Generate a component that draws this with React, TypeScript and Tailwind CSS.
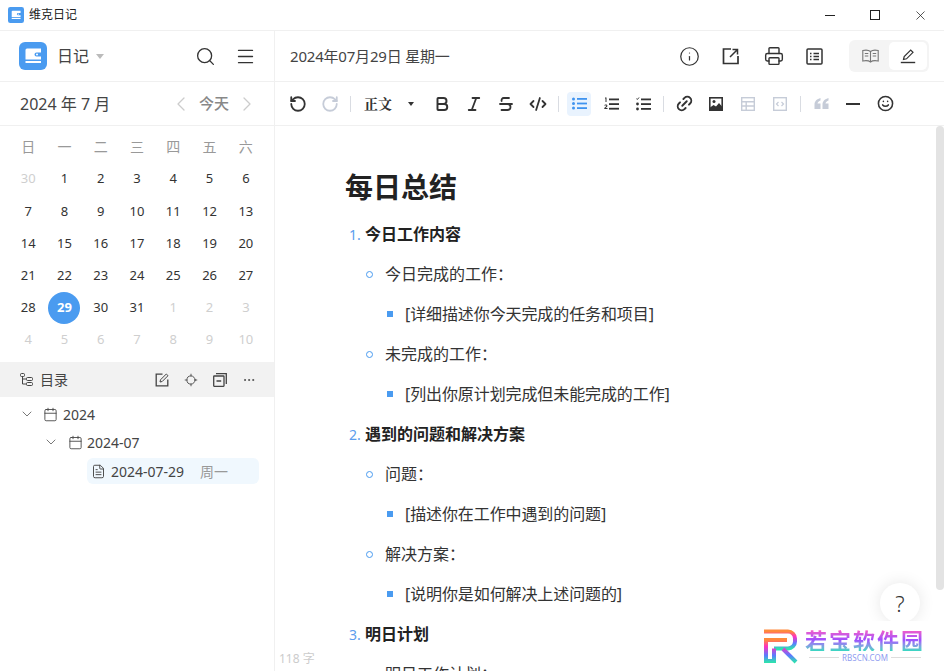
import type { ReactNode } from 'react';
import {
  Search, Menu, Info, Printer, RotateCcw, RotateCw, Bold, Italic, Strikethrough, CodeXml, Link2, Smile, ChevronLeft, ChevronRight, ChevronDown, Calendar, FileText, Ellipsis, Locate, X,
} from 'lucide-react';

const weekdays = ['日', '一', '二', '三', '四', '五', '六'];
const days = [
  [30, 1, 2, 3, 4, 5, 6],
  [7, 8, 9, 10, 11, 12, 13],
  [14, 15, 16, 17, 18, 19, 20],
  [21, 22, 23, 24, 25, 26, 27],
  [28, 29, 30, 31, 1, 2, 3],
  [4, 5, 6, 7, 8, 9, 10],
];

function isMuted(row: number, day: number) {
  return (row === 0 && day > 20) || (row === 4 && day < 10) || row === 5;
}

function WalletLogo({ size, radius }: { size: number; radius: number }) {
  return (
    <svg width={size} height={size} viewBox="0 0 28 28">
      <rect width="28" height="28" rx={radius} fill="#4a9bf0" />
      <path d="M8 6.500h14v4h-4.500a2 2 0 0 0 0 4H22v3H6.500V8A1.500 1.500 0 0 1 8 6.500z" fill="#fff" />
      <rect x="6.500" y="19" width="15.500" height="2" fill="#fff" />
      <circle cx="18" cy="12.500" r="1" fill="#fff" />
    </svg>
  );
}

function ExportIcon() {
  return (
    <svg width="18" height="18" viewBox="0 0 18 18" fill="none" stroke="#333" strokeWidth="1.700">
      <path d="M9 2H1.500v14.500H16V9" />
      <path d="M8 10l7-7M10.500 2.500h5v5" strokeWidth="1.500" />
    </svg>
  );
}

function OutlineIcon() {
  return (
    <svg width="17" height="17" viewBox="0 0 17 17" fill="none" stroke="#333" strokeWidth="1.500">
      <rect x="1" y="1" width="15" height="15" rx="1" />
      <path d="M4 5.500h1.500M4 8.500h1.500M4 11.500h1.500M7.500 5.500h5.500M7.500 8.500h5.500M7.500 11.500h5.500" />
    </svg>
  );
}

function BookIcon() {
  return (
    <svg width="17" height="14" viewBox="0 0 17 14" fill="none" stroke="#777" strokeWidth="1.100">
      <path d="M8.500 2.500C7 1.300 3 1 .8 1.500v10.500c2.400-.5 6.200-.2 7.700 1 1.500-1.200 5.300-1.500 7.700-1V1.500C14 1 10 1.300 8.500 2.500zM8.500 2.500v10.500" />
      <path d="M2.800 4.500h3.500M2.800 7h3.500M10.700 4.500h3.500M10.700 7h3.500" />
    </svg>
  );
}

function PenIcon() {
  return (
    <svg width="16" height="16" viewBox="0 0 16 16" fill="none" stroke="#333" strokeWidth="1.200">
      <path d="M3.500 11.500l.7-3L10.700 2l2.300 2.300L6.500 10.800z" />
      <path d="M.8 14.500h14.400" strokeWidth="1.400" />
    </svg>
  );
}

function BulletListIcon() {
  return (
    <svg width="15" height="13" viewBox="0 0 15 13" fill="#3f93ef">
      <circle cx="1.500" cy="2" r="1.500" />
      <circle cx="1.500" cy="6.500" r="1.500" />
      <circle cx="1.500" cy="11" r="1.500" />
      <rect x="5" y="1" width="10" height="1.800" />
      <rect x="5" y="5.600" width="10" height="1.800" />
      <rect x="5" y="10.200" width="10" height="1.800" />
    </svg>
  );
}

function OrderedListIcon() {
  return (
    <svg width="15" height="14" viewBox="0 0 15 14" fill="#333">
      <rect x="5" y="1.500" width="10" height="1.800" />
      <rect x="5" y="6.200" width="10" height="1.800" />
      <rect x="5" y="10.800" width="10" height="1.800" />
      <path d="M1 .5h1.500v4.500H1.500V1.500H1zM.3 8.500C.5 7 3.400 7 3.400 8.700c0 1-1 1.500-1.800 2.300h1.900v1H.3v-.9c1-1 2-1.700 2-2.300 0-.7-1-.6-1.100 0z" />
    </svg>
  );
}

function TaskListIcon() {
  return (
    <svg width="15" height="14" viewBox="0 0 15 14" fill="#333">
      <path d="M.3 1.500l1 1L3 .5" fill="none" stroke="#333" strokeWidth="1" />
      <circle cx="1.500" cy="7" r="1.400" />
      <circle cx="1.500" cy="12" r="1.400" />
      <rect x="5" y="1.500" width="10" height="1.800" />
      <rect x="5" y="6.200" width="10" height="1.800" />
      <rect x="5" y="11" width="10" height="1.800" />
    </svg>
  );
}

function ImageIcon() {
  return (
    <svg width="14" height="14" viewBox="0 0 14 14">
      <rect x=".8" y=".8" width="12.400" height="12.400" fill="none" stroke="#333" strokeWidth="1.600" />
      <circle cx="5" cy="4.500" r="1.500" fill="#333" />
      <path d="M1 10.500l3.500-2.500 2.500 1.500L10 6l3 3.500V13H1z" fill="#333" />
    </svg>
  );
}

function TableIcon() {
  return (
    <svg width="14" height="14" viewBox="0 0 14 14" fill="none" stroke="#c6ccd8" strokeWidth="1.400">
      <rect x=".7" y=".7" width="12.600" height="12.600" />
      <path d="M.7 4.800h12.600M.7 9h12.600M5.200 4.800v8.500" />
    </svg>
  );
}

function EmbedIcon() {
  return (
    <svg width="14" height="14" viewBox="0 0 14 14" fill="none" stroke="#c6ccd8" strokeWidth="1.400">
      <rect x=".7" y=".7" width="12.600" height="12.600" />
      <path d="M5.500 5L3.500 7l2 2M8.500 5l2 2-2 2" strokeWidth="1.200" />
    </svg>
  );
}

function QuoteIcon() {
  return (
    <svg width="15" height="13" viewBox="0 0 15 13" fill="#c6ccd8">
      <path d="M6.500 1C3 2 .5 4 .5 7.500V12h6V6.500H3.500C3.700 5 5 4 6.500 3.500zM14.500 1C11 2 8.500 4 8.500 7.500V12h6V6.500h-3c.2-1.500 1.500-2.500 3-3z" />
    </svg>
  );
}

function TreeIcon() {
  return (
    <svg width="13" height="13" viewBox="0 0 13 13" fill="none" stroke="#444" strokeWidth="1">
      <rect x=".5" y=".5" width="4" height="3" rx="1" />
      <rect x="6.500" y="4.500" width="6" height="3" rx="1" />
      <rect x="6.500" y="9.500" width="6" height="3" rx="1" />
      <path d="M2.500 3.500V11h4M2.500 6h4" />
    </svg>
  );
}

function NoteIcon() {
  return (
    <svg width="14" height="14" viewBox="0 0 14 14" fill="none" stroke="#444" strokeWidth="1.300">
      <path d="M7.500 1.200H1.200v11.600h11.600V6.500" />
      <path d="M5 9l.5-2.200L11.300 1 13 2.700 7.200 8.500z" strokeWidth="1" />
    </svg>
  );
}

function CollapseIcon() {
  return (
    <svg width="14" height="14" viewBox="0 0 14 14" fill="none" stroke="#444" strokeWidth="1.300">
      <rect x=".7" y="3" width="10.300" height="10.300" rx=".5" />
      <path d="M3 .7h10.300V11M3.500 8h4.700" />
    </svg>
  );
}

function OrderedHead({ index, children }: { index: number; children: string }) {
  return (
    <div className="flex h-10 items-center pl-[4px]">
      <span className="w-[16px] text-[14px] text-[#5c9ded]">{index}.</span>
      <span className="text-[16px] font-bold text-[#222]">{children}</span>
    </div>
  );
}

function CircleItem({ children }: { children: string }) {
  return (
    <div className="flex h-10 items-center pl-[21px]">
      <span className="mr-[12px] h-[7px] w-[7px] rounded-full border border-[#4a9bf0]" />
      <span className="text-[16px] text-[#333]">{children}</span>
    </div>
  );
}

function SquareItem({ children }: { children: string }) {
  return (
    <div className="flex h-10 items-center pl-[42px]">
      <span className="mr-[12px] h-[6px] w-[6px] bg-[#4a9bf0]" />
      <span className="text-[16px] tracking-[-0.1px] text-[#333]">{children}</span>
    </div>
  );
}

function Divider() {
  return (
    <span className="flex w-[9px] justify-center">
      <span className="h-4 w-px bg-[#d9dce2]" />
    </span>
  );
}

function ToolCell({ children }: { children: ReactNode }) {
  return <span className="flex h-[24px] w-[32px] items-center justify-center">{children}</span>;
}

export default function App() {
  return (
    <div className="relative flex h-[671px] w-[944px] flex-col overflow-hidden bg-white font-['Noto_Sans','Noto_Sans_CJK_SC',sans-serif] text-[#333]">
      {/* Title bar */}
      <div className="flex h-[31px] shrink-0 items-center border-b border-[#f0f0f0] pl-[8px]">
        <WalletLogo size={16} radius={4} />
        <span className="ml-[5px] text-[12px] text-[#222]">维克日记</span>
        <div className="ml-auto flex items-center pr-[16px]">
          <span className="h-px w-[10px] bg-[#222]" />
          <span className="ml-[35px] h-[10px] w-[10px] border border-[#222]" />
          <X className="ml-[33px] h-[15px] w-[15px] text-[#222]" strokeWidth={1.200} />
        </div>
      </div>

      <div className="flex min-h-0 flex-1">
        {/* Sidebar */}
        <aside className="flex w-[275px] shrink-0 flex-col border-r border-[#f0f0f0]">
          <div className="flex h-[51px] shrink-0 items-center border-b border-[#f0f0f0] pl-[19px] pr-[18px]">
            <WalletLogo size={28} radius={6} />
            <span className="ml-[10px] text-[16px] text-[#444]">日记</span>
            <span className="ml-[7px] mt-[1px] h-0 w-0 border-x-[4px] border-t-[5px] border-x-transparent border-t-[#bbb]" />
            <Search className="ml-auto h-[21px] w-[21px] text-[#333]" strokeWidth={1.500} />
            <Menu className="ml-[19px] h-[21px] w-[21px] text-[#333]" strokeWidth={1.500} />
          </div>

          <div className="flex h-[44px] shrink-0 items-center border-b border-[#f0f0f0] pl-[20px] pr-[15px]">
            <span className="text-[16px] text-[#444]">2024 年 7 月</span>
            <ChevronLeft className="ml-auto h-[24px] w-[24px] text-[#ccc]" strokeWidth={1.300} />
            <span className="mx-[6px] text-[15px] font-medium text-[#888]">今天</span>
            <ChevronRight className="h-[24px] w-[24px] text-[#ccc]" strokeWidth={1.300} />
          </div>

          {/* Calendar */}
          <div className="grid shrink-0 grid-cols-7 px-[10px] pt-[4px]">
            {weekdays.map((d) => (
              <div key={d} className="flex h-[33px] items-center justify-center text-[14px] text-[#999]">
                {d}
              </div>
            ))}
            {days.map((week, row) =>
              week.map((day) => (
                <div key={`${row}-${day}`} className="flex h-[32.200px] items-center justify-center text-[13px]">
                  {day === 29 && row === 4 ? (
                    <span className="flex h-[32px] w-[32px] items-center justify-center rounded-full bg-[#4a9bf0] font-bold text-white">
                      29
                    </span>
                  ) : (
                    <span className={isMuted(row, day) ? 'text-[#cfcfcf]' : 'text-[#333]'}>{day}</span>
                  )}
                </div>
              )),
            )}
          </div>

          {/* Directory */}
          <div className="mt-[6px] flex h-[35px] shrink-0 items-center bg-[#f2f2f2] pl-[20px] pr-[18px]">
            <TreeIcon />
            <span className="ml-[7px] text-[14px] text-[#444]">目录</span>
            <div className="ml-auto flex items-center gap-[15px]">
              <NoteIcon />
              <Locate className="h-[14px] w-[14px] text-[#444]" strokeWidth={1.500} />
              <CollapseIcon />
              <Ellipsis className="h-[14px] w-[14px] text-[#444]" strokeWidth={1.500} />
            </div>
          </div>

          <div className="flex flex-col pt-[3px] text-[14px] text-[#444]">
            <div className="flex h-[28px] items-center pl-[19px]">
              <ChevronDown className="h-[16px] w-[16px] text-[#555]" strokeWidth={1.200} />
              <Calendar className="ml-[8px] h-[15px] w-[15px] text-[#444]" strokeWidth={1.400} />
              <span className="ml-[5px]">2024</span>
            </div>
            <div className="flex h-[28px] items-center pl-[43px]">
              <ChevronDown className="h-[16px] w-[16px] text-[#555]" strokeWidth={1.200} />
              <Calendar className="ml-[9px] h-[15px] w-[15px] text-[#444]" strokeWidth={1.400} />
              <span className="ml-[4px]">2024-07</span>
            </div>
            <div className="ml-[87px] mr-[15px] mt-[2px] flex h-[26px] items-center rounded-[6px] bg-[#f0f8fe] pl-[4px]">
              <FileText className="h-[15px] w-[15px] text-[#444]" strokeWidth={1.500} />
              <span className="ml-[5px]">2024-07-29</span>
              <span className="ml-[16px] text-[#999]">周一</span>
            </div>
          </div>
        </aside>

        {/* Editor */}
        <main className="flex min-w-0 flex-1 flex-col">
          <div className="flex h-[51px] shrink-0 items-center border-b border-[#f0f0f0] pl-[15px] pr-[15px]">
            <span className="text-[15px] tracking-[-0.2px] text-[#444]">2024年07月29日 星期一</span>
            <div className="ml-auto flex items-center gap-[22px]">
              <Info className="h-[21px] w-[21px] text-[#333]" strokeWidth={1.400} />
              <ExportIcon />
              <Printer className="ml-[2px] h-[20px] w-[20px] text-[#333]" strokeWidth={1.700} />
              <OutlineIcon />
            </div>
            <div className="ml-[26px] flex h-[32px] w-[80px] items-center rounded-[6px] bg-[#f4f4f4] p-[2px]">
              <span className="flex flex-1 items-center justify-center">
                <BookIcon />
              </span>
              <span className="flex h-[28px] w-[38px] items-center justify-center rounded-[5px] bg-white">
                <PenIcon />
              </span>
            </div>
          </div>

          <div className="flex h-[44px] shrink-0 items-center border-b border-[#f0f0f0] pl-[7px] text-[#333]">
            <ToolCell><RotateCcw className="h-[18px] w-[18px]" strokeWidth={2.400} /></ToolCell>
            <ToolCell><RotateCw className="h-[18px] w-[18px] text-[#c6ccd8]" strokeWidth={2.400} /></ToolCell>
            <Divider />
            <span className="ml-[9px] font-['Noto_Serif_CJK_SC','Noto_Sans_CJK_SC',serif] text-[14px] font-bold">正文</span>
            <span className="ml-[16px] h-0 w-0 border-x-[3px] border-t-[4px] border-x-transparent border-t-[#333]" />
            <span className="ml-[12px]" />
            <ToolCell><Bold className="h-[18px] w-[18px]" strokeWidth={2.600} /></ToolCell>
            <ToolCell><Italic className="h-[18px] w-[18px]" strokeWidth={2.400} /></ToolCell>
            <ToolCell><Strikethrough className="h-[18px] w-[18px]" strokeWidth={2.400} /></ToolCell>
            <ToolCell><CodeXml className="h-[18px] w-[18px]" strokeWidth={2.400} /></ToolCell>
            <Divider />
            <ToolCell>
              <span className="flex h-[24px] w-[24px] items-center justify-center rounded-[4px] bg-[#e9f3fe]">
                <BulletListIcon />
              </span>
            </ToolCell>
            <ToolCell><OrderedListIcon /></ToolCell>
            <ToolCell><TaskListIcon /></ToolCell>
            <Divider />
            <ToolCell><Link2 className="h-[19px] w-[19px] -rotate-45" strokeWidth={2.400} /></ToolCell>
            <ToolCell><ImageIcon /></ToolCell>
            <ToolCell><TableIcon /></ToolCell>
            <ToolCell><EmbedIcon /></ToolCell>
            <Divider />
            <ToolCell><QuoteIcon /></ToolCell>
            <ToolCell><span className="h-[2px] w-[14px] bg-[#333]" /></ToolCell>
            <ToolCell><Smile className="h-[17px] w-[17px]" strokeWidth={2.200} /></ToolCell>
          </div>

          <div className="flex min-h-0 flex-1">
            <div className="min-w-0 flex-1 overflow-hidden pl-[70px] pt-[40px]">
              <h1 className="mb-[6px] text-[28px] font-bold leading-[42px] text-[#222]">每日总结</h1>
              <OrderedHead index={1}>今日工作内容</OrderedHead>
              <CircleItem>今日完成的工作：</CircleItem>
              <SquareItem>[详细描述你今天完成的任务和项目]</SquareItem>
              <CircleItem>未完成的工作：</CircleItem>
              <SquareItem>[列出你原计划完成但未能完成的工作]</SquareItem>
              <OrderedHead index={2}>遇到的问题和解决方案</OrderedHead>
              <CircleItem>问题：</CircleItem>
              <SquareItem>[描述你在工作中遇到的问题]</SquareItem>
              <CircleItem>解决方案：</CircleItem>
              <SquareItem>[说明你是如何解决上述问题的]</SquareItem>
              <OrderedHead index={3}>明日计划</OrderedHead>
              <CircleItem>明日工作计划：</CircleItem>
            </div>
            <div className="w-[8px] shrink-0 pb-[81px]">
              <div className="h-full rounded-[4px] bg-[#e3e3e3]" />
            </div>
          </div>
        </main>
      </div>

      {/* Word count */}
      <span className="absolute left-[279px] top-[650px] text-[12px] text-[#ccc]">118 字</span>

      {/* Help button */}
      <div className="absolute left-[880px] top-[583px] flex h-[40px] w-[40px] items-center justify-center rounded-full bg-white text-[22px] font-light text-[#333] shadow-[0_0_16px_rgba(0,0,0,0.1)]">
        ?
      </div>

      {/* Watermark */}
      <div className="absolute bottom-0 left-[755px] flex h-[50px] w-[189px] items-center bg-white pl-[9px]">
        <svg width="36" height="35" viewBox="0 0 36 35" fill="none" strokeWidth="4">
          <defs>
            <linearGradient id="rb" x1="0" y1="0" x2="0" y2="1">
              <stop offset="0" stopColor="#ff8a3c" />
              <stop offset="0.3" stopColor="#ff2fc0" />
              <stop offset="0.7" stopColor="#5a7bff" />
              <stop offset="1" stopColor="#2fe0b0" />
            </linearGradient>
          </defs>
          <path d="M0 2.500h24a7 7 0 0 1 7 7v3a7 7 0 0 1-7 7H10" stroke="url(#rb)" />
          <path d="M0 11h23M2 11v21h8V19.500M19 20l13 13" stroke="url(#rb)" />
        </svg>
        <div className="ml-[5px] flex flex-col items-center pb-[3px]">
          <span className="bg-gradient-to-b from-[#ff5ac0] via-[#a04cff] to-[#2fd8c0] bg-clip-text text-[22px] font-bold leading-[22px] tracking-[2px] text-transparent">
            若宝软件园
          </span>
          <div className="mt-[4px] flex h-[6px] w-[112px] items-center gap-[3px]">
            <span className="h-px flex-1 bg-[#ddd]" />
            <span className="text-[8px] leading-[6px] text-[#8f9cf0]">RBSCN.COM</span>
            <span className="h-px flex-1 bg-[#ddd]" />
          </div>
        </div>
      </div>
    </div>
  );
}
